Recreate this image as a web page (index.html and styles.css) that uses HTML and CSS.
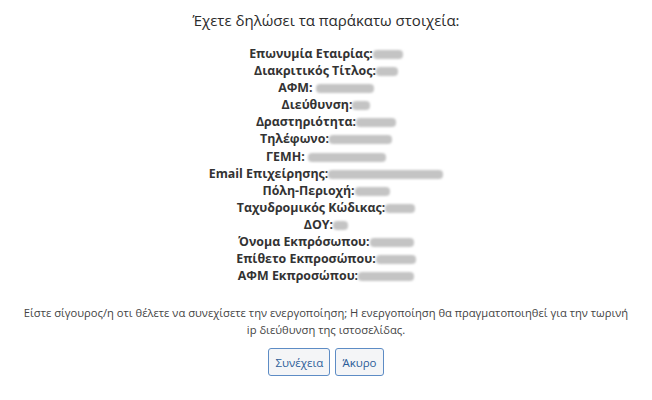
FILE: index.html
```html
<!DOCTYPE html>
<html lang="el">
<head>
<meta charset="utf-8">
<link rel="stylesheet" href="styles.css">
</head>
<body>
<div class="page">
  <h2 class="title">Έχετε δηλώσει τα παράκατω στοιχεία:</h2>
  <div class="fields">
    <div class="row">Επωνυμία Εταιρίας:<span class="blur" style="width:30px"></span></div>
    <div class="row">Διακριτικός Τίτλος:<span class="blur" style="width:22px"></span></div>
    <div class="row">ΑΦΜ: <span class="blur" style="width:58px"></span></div>
    <div class="row">Διεύθυνση:<span class="blur" style="width:18px"></span></div>
    <div class="row">Δραστηριότητα:<span class="blur" style="width:40px"></span></div>
    <div class="row">Τηλέφωνο:<span class="blur" style="width:63px"></span></div>
    <div class="row">ΓΕΜΗ: <span class="blur" style="width:78px"></span></div>
    <div class="row">Email Επιχείρησης:<span class="blur" style="width:115px"></span></div>
    <div class="row">Πόλη-Περιοχή:<span class="blur" style="width:35px"></span></div>
    <div class="row">Ταχυδρομικός Κώδικας:<span class="blur" style="width:30px"></span></div>
    <div class="row">ΔΟΥ:<span class="blur" style="width:15px"></span></div>
    <div class="row">Όνομα Εκπρόσωπου:<span class="blur" style="width:44px"></span></div>
    <div class="row">Επίθετο Εκπροσώπου:<span class="blur" style="width:40px"></span></div>
    <div class="row">ΑΦΜ Εκπροσώπου:<span class="blur" style="width:56px"></span></div>
  </div>
  <p class="confirm">Είστε σίγουρος/η οτι θέλετε να συνεχίσετε την ενεργοποίηση; Η ενεργοποίηση θα πραγματοποιηθεί για την τωρινή ip διεύθυνση της ιστοσελίδας.</p>
  <div class="actions">
    <button class="btn">Συνέχεια</button>
    <button class="btn">Άκυρο</button>
  </div>
</div>
</body>
</html>
```
FILE: styles.css
```css
html, body {
  margin: 0;
  padding: 0;
  background: #fff;
}
body {
  font-family: "Open Sans", "Noto Sans", sans-serif;
  color: #333;
}
.page {
  display: flex;
  flex-direction: column;
  align-items: center;
  padding-top: 10px;
}
.title {
  font-size: 15px;
  font-weight: 400;
  margin: 0 0 15px 0;
  color: #2b2b2b;
  line-height: 20px;
}
.fields {
  display: flex;
  flex-direction: column;
  align-items: center;
}
.row {
  font-size: 12.4px;
  font-weight: 700;
  line-height: 17.1px;
  color: #333;
  white-space: nowrap;
}
.blur {
  display: inline-block;
  height: 9px;
  background: #c4c4c4;
  border-radius: 4px;
  filter: blur(1.2px);
  vertical-align: -1px;
}
.confirm {
  font-size: 11.2px;
  line-height: 17px;
  text-align: center;
  width: 612px;
  margin: 20px 0 0 0;
  color: #444;
}
.actions {
  display: flex;
  gap: 5px;
  margin-top: 10px;
}
.btn {
  font-family: inherit;
  font-size: 11.5px;
  color: #2d5d99;
  background: #f4f5f7;
  border: 1px solid #5d8cc5;
  border-radius: 3px;
  height: 28px;
  padding: 0 6px;
}
```
